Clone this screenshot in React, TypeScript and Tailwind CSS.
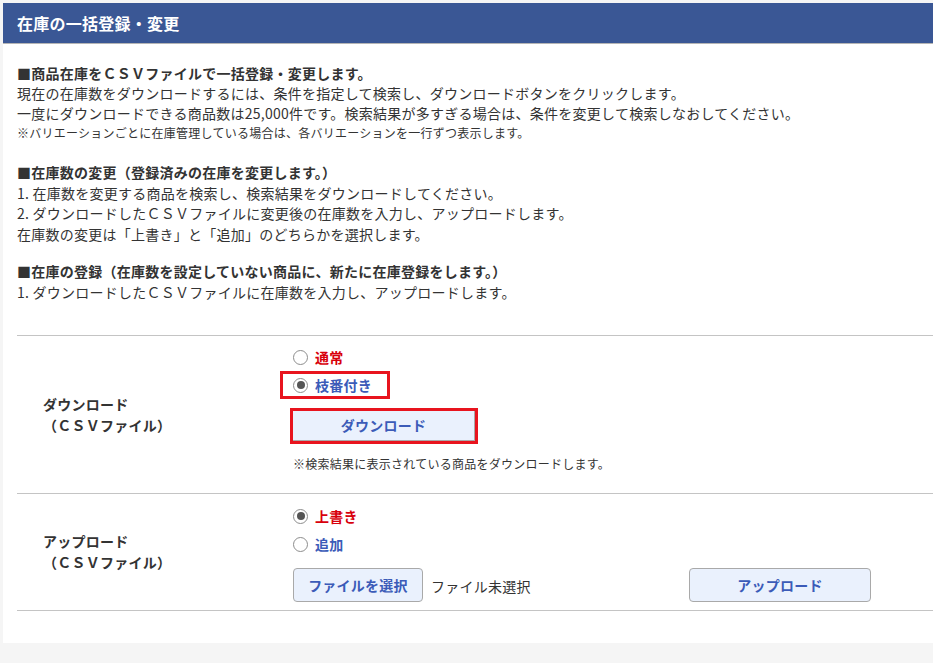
import type { ReactNode } from 'react';

const font = { fontFamily: '"Noto Sans CJK JP", "Noto Sans", sans-serif' };

function Radio({ checked }: { checked?: boolean }) {
  return (
    <span className="w-[15px] h-[15px] rounded-full border border-[#8d8d8d] bg-white flex items-center justify-center shrink-0">
      {checked && <span className="w-[8px] h-[8px] rounded-full bg-[#555]" />}
    </span>
  );
}

function RadioRow({
  checked,
  color,
  children,
  marked,
}: {
  checked?: boolean;
  color: 'red' | 'blue';
  children: ReactNode;
  marked?: boolean;
}) {
  return (
    <label className="relative h-[28px] flex items-center gap-[7px] w-fit">
      <Radio checked={checked} />
      <span
        className={[
          'text-[14px] font-bold leading-none',
          color === 'red' ? 'text-[#d8000c]' : 'text-[#3b5bb8]',
        ].join(' ')}
      >
        {children}
      </span>
      {/* highlight frame */}
      {marked && (
        <span className="absolute left-[-13px] right-[-18px] top-0 bottom-0 border-[3px] border-[#e8141e] pointer-events-none" />
      )}
    </label>
  );
}

function RowLabel({ title }: { title: string }) {
  return (
    <div className="w-[276px] shrink-0 pl-[26px] flex flex-col justify-center text-[14px] font-bold text-[#333] leading-[21px]">
      <span>{title}</span>
      <span>（ＣＳＶファイル）</span>
    </div>
  );
}

export default function App() {
  return (
    <div className="min-h-[663px] bg-[#f5f5f5] pt-[3px] pl-[3px] overflow-hidden tracking-[0.25px]" style={font}>
      <div className="bg-white pb-[32px]">
        {/* title bar */}
        <div className="h-[41px] bg-[#3a5795] border-b border-[#b5b5b5] flex items-center pl-[14px]">
          <h1 className="text-white text-[16px] font-bold">在庫の一括登録・変更</h1>
        </div>

        <div className="pl-[14px] pt-[19px] text-[#333]">
          <div className="text-[14px] leading-[20px]">
            <p className="font-bold">■商品在庫をＣＳＶファイルで一括登録・変更します。</p>
            <p>現在の在庫数をダウンロードするには、条件を指定して検索し、ダウンロードボタンをクリックします。</p>
            <p>一度にダウンロードできる商品数は25,000件です。検索結果が多すぎる場合は、条件を変更して検索しなおしてください。</p>
            <p className="text-[12px]">※バリエーションごとに在庫管理している場合は、各バリエーションを一行ずつ表示します。</p>
          </div>

          <div className="mt-[19px] text-[14px] leading-[20.5px]">
            <p className="font-bold">■在庫数の変更（登録済みの在庫を変更します。）</p>
            <p>1. 在庫数を変更する商品を検索し、検索結果をダウンロードしてください。</p>
            <p>2. ダウンロードしたＣＳＶファイルに変更後の在庫数を入力し、アップロードします。</p>
            <p>在庫数の変更は「上書き」と「追加」のどちらかを選択します。</p>
          </div>

          <div className="mt-[17px] text-[14px] leading-[20.5px]">
            <p className="font-bold">■在庫の登録（在庫数を設定していない商品に、新たに在庫登録をします。）</p>
            <p>1. ダウンロードしたＣＳＶファイルに在庫数を入力し、アップロードします。</p>
          </div>

          {/* form table */}
          <div className="mt-[33px] border-t border-[#c4c4c4]">
            <div className="flex border-b border-[#c4c4c4]">
              <RowLabel title="ダウンロード" />
              <div className="pt-[7px] pb-[20px]">
                <RadioRow color="red">通常</RadioRow>
                <RadioRow color="blue" checked marked>
                  枝番付き
                </RadioRow>
                <button className="mt-[12px] w-[182px] h-[30px] bg-[#eaf1fd] border-r border-b border-[#a9a9a9] outline-[3px] outline-solid outline-[#e8141e] text-[14px] font-bold text-[#3b5bb8]">
                  ダウンロード
                </button>
                <p className="mt-[14px] text-[12px] leading-[18px] text-[#333]">
                  ※検索結果に表示されている商品をダウンロードします。
                </p>
              </div>
            </div>

            <div className="flex border-b border-[#c4c4c4]">
              <RowLabel title="アップロード" />
              <div className="pt-[8px] pb-[8px]">
                <RadioRow color="red" checked>
                  上書き
                </RadioRow>
                <RadioRow color="blue">追加</RadioRow>
                <div className="mt-[10px] flex items-center">
                  <div className="w-[396px] flex items-center gap-[8px]">
                    <button className="w-[130px] h-[34px] rounded-[4px] bg-[#eaf1fd] border border-[#a9a9a9] text-[14px] font-bold text-[#3b5bb8]">
                      ファイルを選択
                    </button>
                    <span className="text-[14px] text-[#333] pt-[3px]">ファイル未選択</span>
                  </div>
                  <button className="w-[182px] h-[34px] rounded-[4px] bg-[#eaf1fd] border border-[#a9a9a9] text-[14px] font-bold text-[#3b5bb8]">
                    アップロード
                  </button>
                </div>
              </div>
            </div>
          </div>
        </div>
      </div>
    </div>
  );
}
